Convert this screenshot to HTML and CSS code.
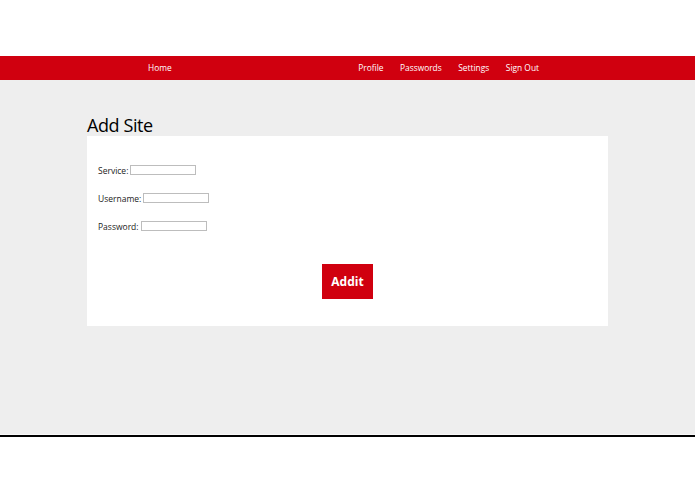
FILE: index.html
```html
<!DOCTYPE html>
<html>
<head>
<meta charset="utf-8">
<link rel="stylesheet" href="styles.css">
</head>
<body>
<div class="top-space"></div>
<nav class="nav">
  <a class="nav-link home" href="#">Home</a>
  <div class="nav-right">
    <a class="nav-link" href="#">Profile</a>
    <a class="nav-link" href="#">Passwords</a>
    <a class="nav-link" href="#">Settings</a>
    <a class="nav-link" href="#">Sign Out</a>
  </div>
</nav>
<main class="main">
  <h1 class="title">Add Site</h1>
  <form class="card">
    <div class="row"><label>Service:</label><input class="field" type="text"></div>
    <div class="row"><label>Username:</label><input class="field" type="text"></div>
    <div class="row"><label>Password:</label><input class="field" type="password"></div>
    <div class="actions"><button class="btn" type="button">Addit</button></div>
  </form>
</main>
<div class="bottom-line"></div>
</body>
</html>
```
FILE: styles.css
```css
html, body {
  margin: 0;
  padding: 0;
  background: #ffffff;
  font-family: "Open Sans", "Noto Sans", sans-serif;
}
.top-space {
  height: 56px;
}
.nav {
  height: 24px;
  background: #d0000f;
  display: flex;
  align-items: center;
  justify-content: space-between;
  padding: 0 156px 0 148px;
}
.nav-right {
  display: flex;
  gap: 16.5px;
}
.nav-link {
  color: #ffffff;
  text-decoration: none;
  font-size: 8.4px;
  line-height: 24px;
}
.main {
  background: #eeeeee;
  height: 320px;
  padding: 34px 87px 0 87px;
  border-bottom: 1px solid #f8f8f8;
}
.title {
  margin: 0;
  font-weight: 400;
  font-size: 18px;
  letter-spacing: -0.4px;
  line-height: 22px;
  color: #000000;
}
.card {
  background: #ffffff;
  height: 170px;
  padding: 20px 11px 0 11px;
  margin: 0;
}
.row {
  height: 28px;
  display: flex;
  align-items: center;
  gap: 2px;
}
.row label {
  font-size: 8.5px;
  color: #222222;
}
.field {
  width: 64px;
  height: 8px;
  border: 1px solid #bdbdbd;
  padding: 0;
  margin: 0;
  background: #ffffff;
}
.actions {
  display: flex;
  justify-content: center;
  margin-top: 24px;
}
.btn {
  width: 51px;
  height: 35px;
  background: #d0000f;
  color: #ffffff;
  border: none;
  font-family: "Open Sans", "Noto Sans", sans-serif;
  font-weight: 700;
  font-size: 12px;
  padding: 0;
}
.bottom-line {
  height: 2px;
  background: #000000;
}
```
